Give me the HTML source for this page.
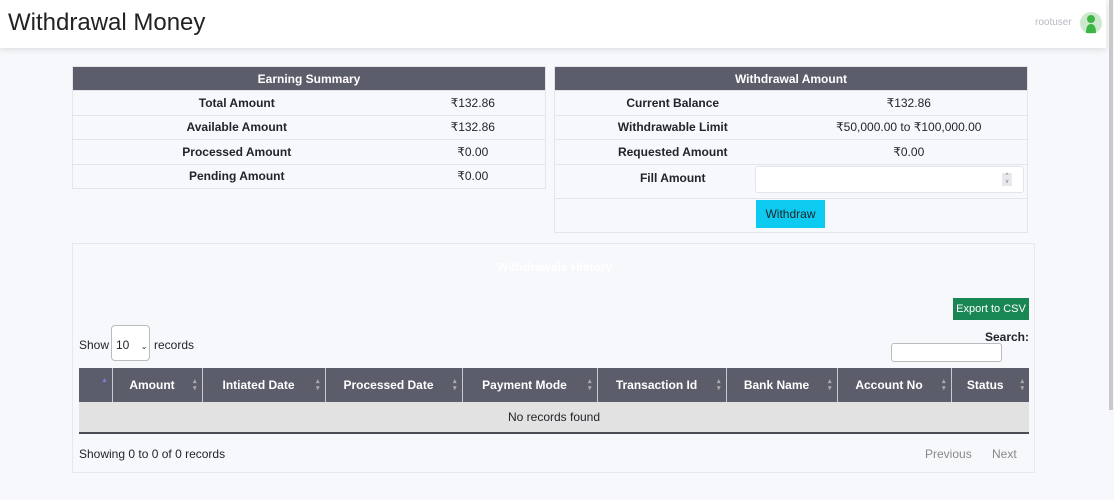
<!DOCTYPE html><html><head><style>
*{box-sizing:border-box;margin:0;padding:0}
body{width:1114px;height:500px;background:#f7f8fb;font-family:"Liberation Sans",sans-serif;font-size:12px;color:#212529;position:relative;overflow:hidden}
.a{position:absolute}
.hdr{left:0;top:0;width:1106px;height:48px;background:#fff;box-shadow:0 2px 6px rgba(0,0,0,.1)}
.t{border-collapse:collapse;position:absolute;table-layout:fixed;border:1px solid #e3e5ea}
.t td{border-top:1px solid #e3e5ea;height:24.5px;text-align:center;font-size:12px}
.t th{background:#5c5d6a;color:#fff;height:24px;font-size:12px}
.b{font-weight:bold}
.dt{border-collapse:collapse;position:absolute;left:79px;top:368px;width:950px;table-layout:fixed}
.dt th{background:#5c5d6a;color:#fff;height:34px;border-right:1px solid #c8cad2;font-size:12px;position:relative;padding-right:10px;text-align:center}
.dt th.s:after{content:"▴\A▾";white-space:pre;position:absolute;right:5px;top:10px;font-size:7px;line-height:7px;color:#aaa}
.dt td{background:#e2e2e2;height:31px;text-align:center;border-bottom:2px solid #4a4b55;font-size:12px}
</style></head><body>
<div class="a hdr"></div>
<div class="a" style="left:8px;top:9px;font-size:24px;color:#222">Withdrawal Money</div>
<div class="a" style="left:1035px;top:17px;font-size:10px;color:#b5b9c2">rootuser</div>
<svg class="a" style="left:1079px;top:11px" width="24" height="24"><circle cx="12" cy="12" r="11" fill="#cde8cf"/><circle cx="12" cy="8" r="4" fill="#3cb544"/><path d="M7 22 Q7 13 12 13 Q17 13 17 22Z" fill="#3cb544"/></svg>
<div class="a" style="left:1109px;top:0;width:4px;height:410px;background:#c9c9c9"></div>
<table class="t" style="left:72px;top:66px;width:474px">
<colgroup><col style="width:328px"><col></colgroup>
<tr><th colspan="2">Earning Summary</th></tr>
<tr><td class="b">Total Amount</td><td>₹132.86</td></tr>
<tr><td class="b">Available Amount</td><td>₹132.86</td></tr>
<tr><td class="b">Processed Amount</td><td>₹0.00</td></tr>
<tr><td class="b">Pending Amount</td><td>₹0.00</td></tr>
</table>
<table class="t" style="left:554px;top:66px;width:474px">
<colgroup><col style="width:236px"><col></colgroup>
<tr><th colspan="2">Withdrawal Amount</th></tr>
<tr><td class="b">Current Balance</td><td>₹132.86</td></tr>
<tr><td class="b">Withdrawable Limit</td><td>₹50,000.00 to ₹100,000.00</td></tr>
<tr><td class="b">Requested Amount</td><td>₹0.00</td></tr>
<tr><td class="b" style="height:34px;vertical-align:top;padding-top:6px">Fill Amount</td><td></td></tr>
<tr><td colspan="2" style="height:34px"></td></tr>
</table>
<div class="a" style="left:755px;top:166px;width:269px;height:27px;background:#fff;border:1px solid #e3e5ea;border-radius:3px"></div>
<div class="a" style="left:1002px;top:173px;width:10px;height:13px;background:#e9e9ed;font-size:6px;color:#777;text-align:center;line-height:6px">^<br>v</div>
<div class="a" style="left:756px;top:200px;width:69px;height:28px;background:#0dcaf0;font-size:12px;text-align:center;line-height:28px">Withdraw</div>
<div class="a" style="left:72px;top:243px;width:963px;height:230px;border:1px solid #e6e8ec"></div>
<div class="a" style="left:497px;top:260px;color:#fff;font-size:12px;font-weight:bold">Withdrawals History</div>
<div class="a" style="left:953px;top:298px;width:76px;height:22px;background:#198754;color:#fff;font-size:11px;text-align:center;line-height:22px">Export to CSV</div>
<div class="a" style="left:79px;top:338px">Show</div>
<div class="a" style="left:111px;top:325px;width:39px;height:36px;border:1px solid #bbb;border-radius:4px;background:#fff;padding:12px 0 0 4px">10 <span style="font-size:8px;margin-left:8px">⌄</span></div>
<div class="a" style="left:154px;top:338px">records</div>
<div class="a b" style="left:983px;top:330px;width:46px;text-align:right">Search:</div>
<div class="a" style="left:891px;top:343px;width:111px;height:19px;border:1px solid #bbb;border-radius:3px;background:#fff"></div>
<table class="dt"><tr>
<th style="width:33px"><span style="color:#7b7fd6;font-size:7px;position:absolute;left:22px;top:9px">▲</span></th>
<th class="s" style="width:90px">Amount</th><th class="s" style="width:123px">Intiated Date</th><th class="s" style="width:137px">Processed Date</th><th class="s" style="width:135px">Payment Mode</th><th class="s" style="width:129px">Transaction Id</th><th class="s" style="width:111px">Bank Name</th><th class="s" style="width:114px">Account No</th><th class="s" style="border-right:0">Status</th>
</tr><tr><td colspan="9">No records found</td></tr></table>
<div class="a" style="left:79px;top:447px">Showing 0 to 0 of 0 records</div>
<div class="a" style="left:925px;top:447px;color:#888">Previous</div>
<div class="a" style="left:992px;top:447px;color:#888">Next</div>
</body></html>
